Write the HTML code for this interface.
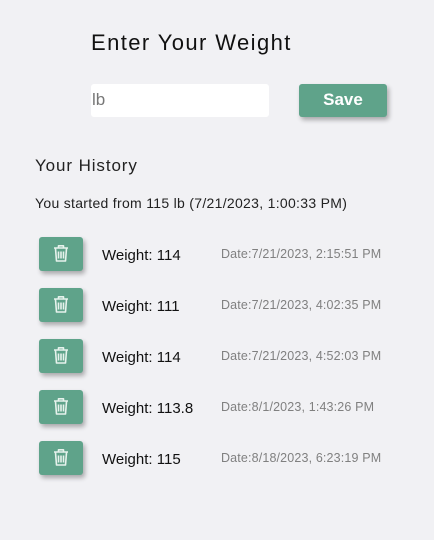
<!DOCTYPE html>
<html><head><style>
body{margin:0;width:434px;height:540px;background:#f1f1f4;font-family:"Liberation Sans",sans-serif;position:relative;overflow:hidden}
.a{position:absolute;white-space:nowrap}
.btn{position:absolute;background:#5fa38a;border-radius:3px;box-shadow:2px 3px 5px rgba(0,0,0,.3)}
</style></head><body>
<div class="a" style="left:91px;top:30px;font-size:22px;color:#111;letter-spacing:1.4px">Enter Your Weight</div>
<div class="a" style="left:91px;top:84px;width:178px;height:33px;background:#fff;border-radius:3px"></div>
<div class="a" style="left:92px;top:90px;font-size:17px;color:#777">lb</div>
<div class="btn" style="left:299px;top:84px;width:88px;height:33px"></div>
<div class="a" style="left:299px;top:90px;width:88px;text-align:center;font-size:17px;color:#fff;font-weight:bold">Save</div>
<div class="a" style="left:35px;top:156px;font-size:17px;color:#222;letter-spacing:0.9px">Your History</div>
<div class="a" style="left:35px;top:195px;font-size:14px;color:#222;letter-spacing:0.3px">You started from 115 lb (7/21/2023, 1:00:33 PM)</div>
<div id="rows"></div>
<script>
var d=[["114","7/21/2023, 2:15:51 PM"],["111","7/21/2023, 4:02:35 PM"],["114","7/21/2023, 4:52:03 PM"],["113.8","8/1/2023, 1:43:26 PM"],["115","8/18/2023, 6:23:19 PM"]];
var h="";d.forEach(function(r,i){var y=237+i*51;
h+='<div class="btn" style="left:39px;top:'+y+'px;width:44px;height:34px"><svg width="44" height="34" viewBox="0 0 44 34"><g fill="none" stroke="#e6f2ec" stroke-width="1.6" stroke-linejoin="round"><path d="M15 11h14M19.5 11v-2.2h5v2.2M16.5 11.5l1 12.5h9l1-12.5M19.5 14.5v7M22 14.5v7M24.5 14.5v7"/></g></svg></div>';
h+='<div class="a" style="left:102px;top:'+(y+10)+'px;font-size:15px;color:#111">Weight: '+r[0]+'</div>';
h+='<div class="a" style="left:221px;top:'+(y+10)+'px;font-size:12.5px;color:#808080;letter-spacing:0.15px">Date:'+r[1]+'</div>';});
document.getElementById("rows").innerHTML=h;
</script>
</body></html>
